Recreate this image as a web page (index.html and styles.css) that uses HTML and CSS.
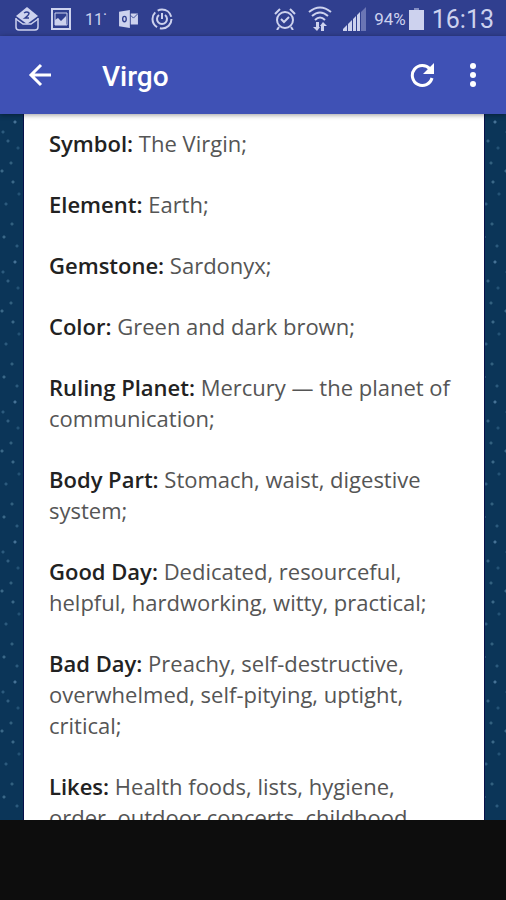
FILE: index.html
```
<!DOCTYPE html>
<html lang="en">
<head>
    <meta charset="UTF-8">
    <meta name="viewport" content="width=device-width, initial-scale=1.0">
    <title>Virgo</title>
    <link rel="stylesheet" href="styles.css">
</head>
<body>

    <!-- Status bar -->
    <div class="status-bar">
        <div class="notifications">
            <svg width="24" height="24" viewBox="0 0 24 24" aria-hidden="true">
                <path d="M1 11v9q0 3 3 3h16q3 0 3-3v-9" fill="none" stroke="currentColor" stroke-width="1.5"/>
                <path d="M1 9 12 0l11 9-11 8z" fill="currentColor"/>
                <path d="M1 12l7 5h8l7-5" fill="none" stroke="currentColor" stroke-width="1.5"/>
                <path d="M9 6q3-2 5 0 0 2-4 5h4" fill="none" stroke="#303f8f" stroke-width="1.5"/>
            </svg>
            <svg width="20" height="22" viewBox="0 0 20 22" aria-hidden="true">
                <path d="M1 1h18v20H1z" fill="none" stroke="currentColor" stroke-width="2"/>
                <path d="M4 5h12v12H4z" fill="none" stroke="currentColor" stroke-width="1"/>
                <path d="M4 17v-5l3-2 3 3 5-5v9z" fill="currentColor"/>
            </svg>
            <span class="temperature">11˙</span>
            <svg width="21" height="18" viewBox="0 0 21 20" aria-hidden="true">
                <path d="M0 2 12 0v20L0 18zM13 4h8v12h-8z" fill="currentColor"/>
                <path d="M13 6l3 3 5-5" fill="none" stroke="#303f8f" stroke-width="1"/>
                <ellipse cx="6" cy="10" rx="2" ry="3" fill="none" stroke="#303f8f" stroke-width="1.5"/>
            </svg>
            <svg width="22" height="22" viewBox="0 0 22 22" aria-hidden="true">
                <circle cx="11" cy="11" r="9.5" fill="none" stroke="currentColor" stroke-width="2" stroke-dasharray="17 3"/>
                <path d="M8 7a5 5 0 1 0 6 0M11 5v6" fill="none" stroke="currentColor" stroke-width="2"/>
            </svg>
        </div>
        <div class="system">
            <svg class="alarm-icon" width="22" height="22" viewBox="0 0 22 22" aria-hidden="true">
                <circle cx="11" cy="12" r="8" fill="none" stroke="currentColor" stroke-width="2"/>
                <path d="M1 6 6 1M21 6l-5-5M5 19l-2 3M17 19l2 3M7 11l3 3 5-5" fill="none" stroke="currentColor" stroke-width="2"/>
            </svg>
            <svg class="wifi-icon" width="24" height="26" viewBox="0 0 24 26" aria-hidden="true">
                <path d="M1 6q11-9 22 0M4 10q8-7 16 0M7 14q5-5 10 0" fill="none" stroke="currentColor" stroke-width="2"/>
                <path d="M8 16h3v5h1l-3 4-4-4h3zM13 25v-5h-1l3-4 4 4h-3v5z" fill="currentColor"/>
            </svg>
            <svg class="signal-icon" width="24" height="24" viewBox="0 0 24 24" aria-hidden="true">
                <path d="M0 24v-2l4-4v6zM5 24v-7l4-4v11zM10 24V12l3-3v15zM14 24V8l3-3v19z" fill="currentColor"/>
                <path d="M18 24V5l5-5v24z" fill="#6a75b4"/>
            </svg>
            <span class="percent">94%</span>
            <svg class="battery-icon" width="15" height="22" viewBox="0 0 15 22" aria-hidden="true">
                <path d="M5 0h5v2H5z" fill="#858fc3"/>
                <path d="M0 2h15v20H0z" fill="currentColor"/>
            </svg>
            <span class="clock">16:13</span>
        </div>
    </div>

    <!-- App bar -->
    <header class="app-bar">
        <button class="icon-button" aria-label="Back">
            <svg width="24" height="24" viewBox="0 0 24 24">
                <path d="M13 2 3 12l10 10M3 12h20" fill="none" stroke="currentColor" stroke-width="3"/>
            </svg>
        </button>
        <h1>Virgo</h1>
        <button class="icon-button" aria-label="Refresh">
            <svg width="24" height="24" viewBox="0 0 24 24">
                <path d="M20 6a10 10 0 1 0 2 9" fill="none" stroke="currentColor" stroke-width="3"/>
                <path d="M24 0v11H13z" fill="currentColor"/>
            </svg>
        </button>
        <button class="icon-button more-button" aria-label="More options">
            <svg width="8" height="24" viewBox="0 0 8 24">
                <circle cx="4" cy="3" r="3" fill="currentColor"/>
                <circle cx="4" cy="12" r="3" fill="currentColor"/>
                <circle cx="4" cy="21" r="3" fill="currentColor"/>
            </svg>
        </button>
    </header>

    <!-- Sign details -->
    <main class="sky">
        <div class="sheet">
            <p><strong>Symbol:</strong> The Virgin;</p>
            <p><strong>Element:</strong> Earth;</p>
            <p><strong>Gemstone:</strong> Sardonyx;</p>
            <p><strong>Color:</strong> Green and dark brown;</p>
            <p><strong>Ruling Planet:</strong> Mercury — the planet of communication;</p>
            <p><strong>Body Part:</strong> Stomach, waist, digestive system;</p>
            <p><strong>Good Day:</strong> Dedicated, resourceful, helpful, hardworking, witty, practical;</p>
            <p><strong>Bad Day:</strong> Preachy, self-destructive, overwhelmed, self-pitying, uptight, critical;</p>
            <p><strong>Likes:</strong> Health foods, lists, hygiene, order, outdoor concerts, childhood</p>
        </div>
    </main>

    <!-- Ad space -->
    <footer class="ad-space"></footer>

</body>
</html>
```

FILE: styles.css
```
* {
    box-sizing: border-box;
}
body {
    margin: 0;
    height: 100vh;
    display: flex;
    flex-direction: column;
    font-family: 'Open Sans', sans-serif;
    background-color: #0d0d0d;
}
svg {
    display: block;
    flex: none;
}

/* Status bar */
.status-bar {
    flex: none;
    height: 36px;
    padding: 2px 12px 0 15px;
    display: flex;
    justify-content: space-between;
    align-items: center;
    background-color: #303f8f;
    color: #cdd2ee;
    font-family: Roboto, sans-serif;
}
.notifications, .system {
    display: flex;
    align-items: center;
}
.notifications {
    gap: 12px;
}
.temperature {
    width: 23px;
    padding-left: 2px;
    font-size: 16px;
}
.alarm-icon {
    margin-right: 12px;
}
.wifi-icon {
    margin-right: 11px;
}
.signal-icon {
    margin-right: 7px;
}
.percent {
    font-size: 17px;
}
.battery-icon {
    margin: 0 8px 0 3px;
}
.clock {
    font-size: 25px;
}

/* App bar */
.app-bar {
    flex: none;
    height: 78px;
    padding: 0 16px;
    display: flex;
    align-items: center;
    background-color: #3f51b5;
    color: #fff;
    box-shadow: 0 1px 5px rgba(0, 0, 0, 0.4);
    z-index: 1;
}
h1 {
    flex: 1;
    margin: 0 0 0 38px;
    padding-top: 3px;
    font-family: Roboto, sans-serif;
    font-size: 28px;
    font-weight: 500;
}
.icon-button {
    width: 48px;
    height: 48px;
    padding: 0;
    border: none;
    background: none;
    color: inherit;
    display: flex;
    justify-content: center;
    align-items: center;
    cursor: pointer;
}
.more-button {
    width: 34px;
    margin-left: 10px;
}

/* Starry background behind the sheet */
.sky {
    flex: 1;
    min-height: 0;
    overflow: hidden;
    padding: 0 22px 0 24px;
    background-color: #0b3558;
    background-image:
        radial-gradient(circle at 15px 8px, #467296 1px, transparent 2px),
        radial-gradient(circle at 3px 18px, #2c5a7d 1px, transparent 2px),
        radial-gradient(circle at 8px 27px, #315e80 1px, transparent 2px),
        radial-gradient(circle at 18px 34px, #245275 1px, transparent 2px),
        radial-gradient(circle at 11px 49px, #32607f 1px, transparent 2px),
        radial-gradient(circle at 2px 57px, #3b6888 1px, transparent 2px),
        radial-gradient(circle at 13px 68px, #3b6888 1px, transparent 2px),
        radial-gradient(circle at 19px 80px, #245275 1px, transparent 2px),
        radial-gradient(circle at 6px 90px, #2c5a7d 1px, transparent 2px),
        radial-gradient(circle at 12px 110px, #32607f 1px, transparent 2px),
        radial-gradient(circle at 4px 123px, #3b6888 1px, transparent 2px),
        radial-gradient(circle at 17px 132px, #2c5a7d 1px, transparent 2px);
    background-size: 24px 140px;
}

/* Text sheet */
.sheet {
    padding: 14px 25px;
    background-color: #fff;
    box-shadow: 0 0 0 1px #08104a;
    color: #555;
    font-size: 22px;
    line-height: 31px;
}
p {
    margin: 0 0 30px;
}
strong {
    font-weight: 600;
    color: #222;
}

.ad-space {
    flex: none;
    height: 80px;
    background-color: #0d0d0d;
    z-index: 1;
}
```
